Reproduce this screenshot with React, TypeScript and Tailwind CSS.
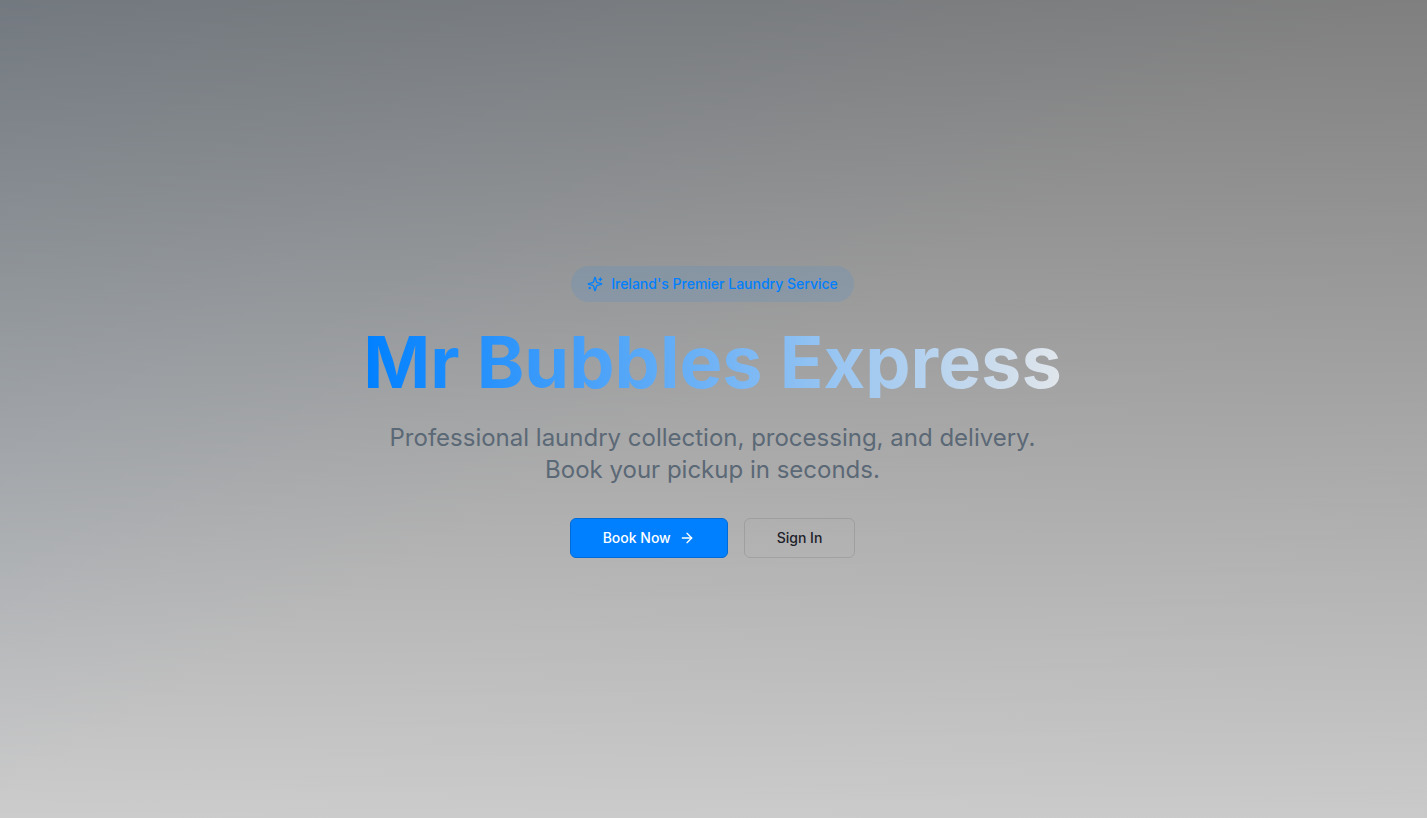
import { ArrowRight } from "lucide-react";

function SparklesIcon() {
  return (
    <svg
      className="size-4"
      viewBox="0 0 24 24"
      fill="none"
      stroke="currentColor"
      strokeWidth="2"
      strokeLinecap="round"
      strokeLinejoin="round"
      aria-hidden="true"
    >
      <path d="M9.937 15.5A2 2 0 0 0 8.5 14.063l-6.135-1.582a.5.5 0 0 1 0-.962L8.5 9.936A2 2 0 0 0 9.937 8.5l1.582-6.135a.5.5 0 0 1 .963 0L14.063 8.5A2 2 0 0 0 15.5 9.937l6.135 1.581a.5.5 0 0 1 0 .964L15.5 14.063a2 2 0 0 0-1.437 1.437l-1.582 6.135a.5.5 0 0 1-.963 0z" />
      <path d="M20 3v4" />
      <path d="M22 5h-4" />
      <path d="M4 17v2" />
      <path d="M5 18H3" />
    </svg>
  );
}

export default function App() {
  return (
    <main className="flex min-h-screen flex-col items-center justify-center bg-white bg-[linear-gradient(to_bottom,rgb(0_0_0/0.5),rgb(0_0_0/0.2)),linear-gradient(to_bottom_right,rgb(0_128_255/0.1),rgb(255_255_255/0)_50%,rgb(229_229_229/0.1))] pt-1.5 pr-4.5 pl-4 text-center font-['Inter',sans-serif]">
      <div className="mb-6 flex items-center gap-2 rounded-full bg-[#0080ff]/10 px-4 py-2 text-sm font-medium text-[#0080ff]">
        <SparklesIcon />
        <span>Ireland's Premier Laundry Service</span>
      </div>
      <h1 className="mb-6 bg-linear-to-r/srgb from-[#0080ff] to-[#e1e6eb] bg-clip-text text-7xl leading-none font-bold text-transparent">
        Mr Bubbles Express
      </h1>
      <p className="mb-8 max-w-2xl text-2xl text-[#5b6876]">
        Professional laundry collection, processing, and delivery. Book your pickup in seconds.
      </p>
      <div className="flex flex-wrap justify-center gap-4">
        <button
          type="button"
          className="flex h-10 items-center gap-2 rounded-md border border-[#006bd6] bg-[#0080ff] px-8 text-sm font-medium text-white"
        >
          Book Now
          <ArrowRight className="size-4" aria-hidden="true" />
        </button>
        <button
          type="button"
          className="flex h-10 items-center rounded-md border border-black/10 px-8 text-sm font-medium text-[#1d2129]"
        >
          Sign In
        </button>
      </div>
    </main>
  );
}
